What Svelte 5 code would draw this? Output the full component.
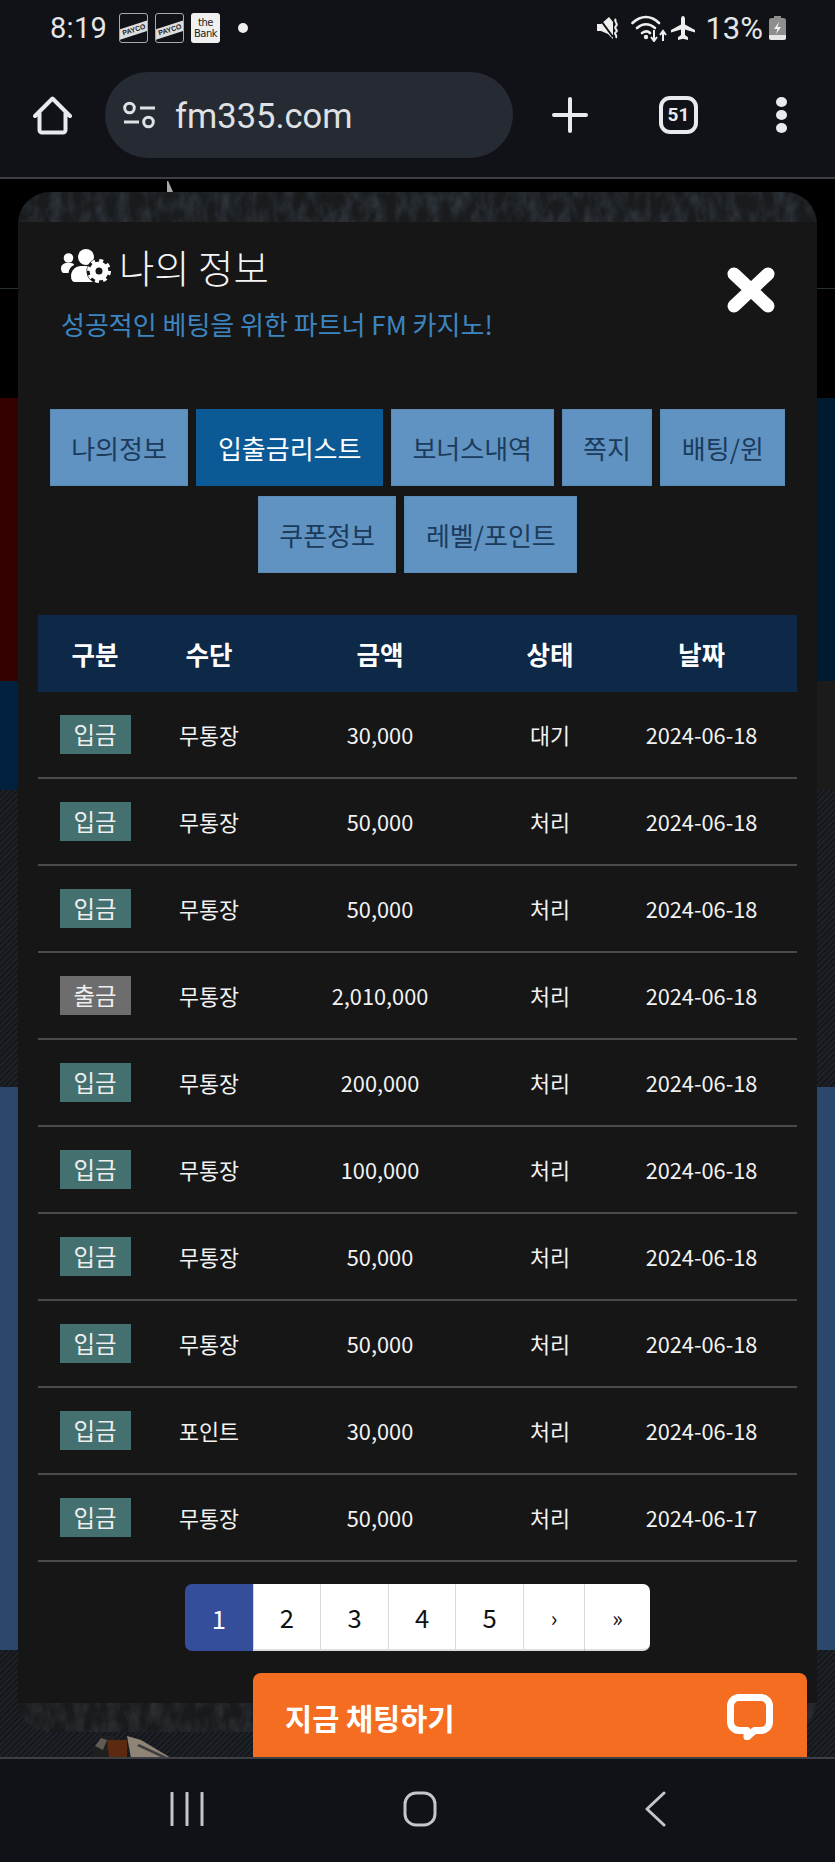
<script>
  const tabs = ['나의정보', '입출금리스트', '보너스내역', '쪽지', '배팅/윈', '쿠폰정보', '레벨/포인트'];
  const activeTab = '입출금리스트';
  const columns = ['구분', '수단', '금액', '상태', '날짜'];
  const rows = [
    { kind: '입금', via: '무통장', amount: '30,000', status: '대기', date: '2024-06-18' },
    { kind: '입금', via: '무통장', amount: '50,000', status: '처리', date: '2024-06-18' },
    { kind: '입금', via: '무통장', amount: '50,000', status: '처리', date: '2024-06-18' },
    { kind: '출금', via: '무통장', amount: '2,010,000', status: '처리', date: '2024-06-18' },
    { kind: '입금', via: '무통장', amount: '200,000', status: '처리', date: '2024-06-18' },
    { kind: '입금', via: '무통장', amount: '100,000', status: '처리', date: '2024-06-18' },
    { kind: '입금', via: '무통장', amount: '50,000', status: '처리', date: '2024-06-18' },
    { kind: '입금', via: '무통장', amount: '50,000', status: '처리', date: '2024-06-18' },
    { kind: '입금', via: '포인트', amount: '30,000', status: '처리', date: '2024-06-18' },
    { kind: '입금', via: '무통장', amount: '50,000', status: '처리', date: '2024-06-17' }
  ];
  const pages = ['1', '2', '3', '4', '5', '›', '»'];
</script>

<div class="screen">
  <header class="chrome">
    <div class="status">
      <span class="time">8:19</span>
      <span class="notif outline"><span class="payco">PAYCO</span></span>
      <span class="notif outline"><span class="payco">PAYCO</span></span>
      <span class="notif bank"><span>the</span><span>Bank</span></span>
      <span class="dot"></span>
      <span class="spacer"></span>
      <svg class="ico-mute" width="22" height="22" viewBox="0 0 22 22">
        <path d="M0 7h4L12 0l4 5v17L11 17 4 14H0z" fill="#eee" />
        <path d="M2 1l14 19" stroke="#101217" stroke-width="2" />
        <path d="M19 2c-3 3 3 4 0 7s3 4 0 6 2 3 0 6" fill="none" stroke="#eee" stroke-width="2" />
      </svg>
      <svg class="ico-wifi" width="36" height="28" viewBox="0 0 36 28">
        <g fill="none" stroke="#eee" stroke-width="2.6" stroke-linecap="round">
          <path d="M1.500 9C10 1 20 1 28 9" />
          <path d="M6 14c6-5 12-5 18 0" />
          <path d="M11 19c3-2 6-2 8 0" />
        </g>
        <circle cx="15" cy="23" r="2.200" fill="#eee" />
        <path d="M23 16v10m-3-3l3 4 3-4M32 27v-9m-3 3l3-4 3 4" fill="none" stroke="#eee" stroke-width="2" />
      </svg>
      <svg class="ico-plane" width="24" height="24" viewBox="0 0 24 24">
        <path d="M12 0c1.300 0 2 1.500 2 3v5.500l10 5.500v2.500l-10-3V19l3 2.200V24l-5-1.300L7 24v-2.800l3-2.200v-5.500l-10 3V14l10-5.500V3c0-1.500.7-3 2-3z" fill="#eee" />
      </svg>
      <span class="battery-text">13%</span>
      <svg class="ico-batt" width="17" height="24" viewBox="0 0 17 24">
        <path d="M5 0h7v2h2.500A2.500 2.500 0 0 1 17 4.500v17a2.500 2.500 0 0 1-2.500 2.500h-12A2.500 2.500 0 0 1 0 21.500v-17A2.500 2.500 0 0 1 2.500 2H5z" fill="#8e8e8e" />
        <path d="M0 19h17v2.500a2.500 2.500 0 0 1-2.500 2.500h-12A2.500 2.500 0 0 1 0 21.500z" fill="#e6e6e6" />
        <path d="M10 6l-5 7h3.500L7 18l5-7H8.500z" fill="#f2f2f2" />
      </svg>
    </div>
    <div class="toolbar">
      <svg class="ico-home" width="40" height="40" viewBox="0 0 40 40">
        <path d="M2 21L19.500 3.500 37 21M6.500 18v17a2.500 2.500 0 0 0 2.500 2.500h21a2.500 2.500 0 0 0 2.500-2.500V18" fill="none" stroke="#e8eaed" stroke-width="4" stroke-linejoin="round" stroke-linecap="round" />
      </svg>
      <div class="omnibox">
        <svg width="32" height="28" viewBox="0 0 32 28">
          <g fill="none" stroke="#dfe1e5" stroke-width="3">
            <circle cx="6.500" cy="7" r="4.800" />
            <path d="M17 7h15M1 21h15" />
            <circle cx="25.500" cy="21" r="4.800" />
          </g>
        </svg>
        <span class="url">fm335.com</span>
      </div>
      <svg class="ico-plus" width="36" height="36" viewBox="0 0 36 36">
        <path d="M18 2v32M2 18h32" stroke="#e8eaed" stroke-width="4" stroke-linecap="round" />
      </svg>
      <span class="tab-count">51</span>
      <span class="menu"><i></i><i></i><i></i></span>
    </div>
  </header>

  <main class="viewport">
    <div class="band blackline"></div>
    <div class="band black"></div>
    <div class="band redblue"></div>
    <div class="band bluegrey"></div>
    <div class="band denim mid"></div>
    <div class="band steel"></div>
    <div class="band denim low"></div>

    <span class="tick"></span>
    <svg class="photo" width="90" height="26" viewBox="0 0 90 26">
      <path d="M0 18L8 4h12v22H0z" fill="#1f1f1f" />
      <path d="M2 14l6-8 6 2-4 10z" fill="#5e5c54" />
      <path d="M14 8h20v18H16z" fill="#5c2a10" />
      <path d="M34 4l14 4 30 18H38z" fill="#8f8577" />
      <path d="M46 12l30 14h-6L44 14z" fill="#3e3e3e" />
    </svg>

    <section class="modal">
      <svg class="strip" width="799" height="30">
        <filter id="grain-top" color-interpolation-filters="sRGB"><feTurbulence type="fractalNoise" baseFrequency="0.09 0.05" numOctaves="3" seed="4" /><feColorMatrix values="0 0 0 0 0.2 0 0 0 0 0.23 0 0 0 0 0.26 1.6 0 0 0 -0.55" /></filter>
        <rect width="799" height="30" fill="#191b1d" />
        <rect width="799" height="30" filter="url(#grain-top)" />
      </svg>
      <div class="panel">
        <div class="head">
          <div>
            <h2 class="title">
              <svg width="50" height="34" viewBox="0 0 50 34">
                <circle cx="7.500" cy="9" r="4.800" fill="#fff" />
                <path d="M0 19c0-3 3-5 6-5h4c2 0 3 1 3 2-3 1.500-5 4-5.500 8H3c-2 0-3-2-3-5z" fill="#fff" />
                <circle cx="25" cy="8" r="8" fill="#fff" />
                <path d="M10 27c0-6 5-10 10-10h11c3 0 5 1 6 3v13H14c-2.500 0-4-2-4-6z" fill="#fff" />
                <circle cx="38" cy="22" r="12.500" fill="#161616" />
                <circle cx="38" cy="22" r="6.500" fill="none" stroke="#fff" stroke-width="6" />
                <circle cx="38" cy="22" r="10.500" fill="none" stroke="#fff" stroke-width="3" stroke-dasharray="4 4.240" />
              </svg>
              <span>나의 정보</span>
            </h2>
            <p class="sub">성공적인 베팅을 위한 파트너 FM 카지노!</p>
          </div>
          <svg class="close" width="48" height="46" viewBox="0 0 48 46">
            <path d="M7 7l34 32M41 7L7 39" stroke="#fff" stroke-width="13" stroke-linecap="round" />
          </svg>
        </div>

        <nav class="tabs">
          {#each tabs as tab}
            <button class="tab" class:active={tab === activeTab}>{tab}</button>
          {/each}
        </nav>

        <table>
          <thead>
            <tr>
              {#each columns as col}
                <th>{col}</th>
              {/each}
            </tr>
          </thead>
          <tbody>
            {#each rows as row}
              <tr>
                <td><span class="badge" class:out={row.kind === '출금'}>{row.kind}</span></td>
                <td>{row.via}</td>
                <td>{row.amount}</td>
                <td>{row.status}</td>
                <td>{row.date}</td>
              </tr>
            {/each}
          </tbody>
        </table>

        <div class="pager">
          {#each pages as page, i}
            <span class="page" class:current={i === 0} class:arrow={i > 4}>{page}</span>
          {/each}
        </div>
      </div>
      <svg class="strip" width="799" height="29">
        <filter id="grain-bottom" color-interpolation-filters="sRGB"><feTurbulence type="fractalNoise" baseFrequency="0.09 0.05" numOctaves="3" seed="9" /><feColorMatrix values="0 0 0 0 0.2 0 0 0 0 0.21 0 0 0 0 0.23 1.6 0 0 0 -0.55" /></filter>
        <rect width="799" height="29" fill="#191a1c" />
        <rect width="799" height="29" filter="url(#grain-bottom)" />
      </svg>
    </section>

    <div class="chat">
      <span>지금 채팅하기</span>
      <svg width="46" height="46" viewBox="0 0 46 46">
        <path d="M12 3.500h22a8.500 8.500 0 0 1 8.500 8.500v16a8.500 8.500 0 0 1-8.500 8.500h-6.500L20 43v-6.500h-8A8.500 8.500 0 0 1 3.500 28V12A8.500 8.500 0 0 1 12 3.500z" fill="none" stroke="#fff" stroke-width="7" stroke-linejoin="round" />
      </svg>
    </div>
  </main>

  <footer class="navbar">
    <svg class="nav-recent" width="34" height="34" viewBox="0 0 34 34">
      <path d="M2 1v32M17 1v32M32 1v32" stroke="#c4c6c9" stroke-width="3" stroke-linecap="round" />
    </svg>
    <svg class="nav-home" width="34" height="36" viewBox="0 0 34 36">
      <rect x="2" y="2" width="30" height="32" rx="11" fill="none" stroke="#c4c6c9" stroke-width="3" />
    </svg>
    <svg class="nav-back" width="22" height="36" viewBox="0 0 22 36">
      <path d="M20 2L3 18l17 16" fill="none" stroke="#c4c6c9" stroke-width="3" stroke-linecap="round" stroke-linejoin="round" />
    </svg>
  </footer>
</div>

<style>
  :global(body) {
    margin: 0;
    background: #000;
  }

  .screen {
    width: 835px;
    height: 1862px;
    display: flex;
    flex-direction: column;
    overflow: hidden;
    font-family: "Noto Sans CJK KR", "Noto Sans", sans-serif;
  }

  /* browser chrome */
  .chrome {
    height: 179px;
    box-sizing: border-box;
    flex: none;
    background: #101217;
    border-bottom: 2px solid #3c4045;
    font-family: Roboto, sans-serif;
    color: #e4e5e7;
  }

  .status {
    height: 56px;
    display: flex;
    align-items: center;
    padding: 0 49px 0 50px;
  }

  .time {
    font-size: 29px;
    width: 69px;
    letter-spacing: 0.3px;
  }

  .notif {
    width: 29px;
    height: 30px;
    margin-right: 7px;
    box-sizing: border-box;
    border-radius: 3px;
    overflow: hidden;
    flex: none;
  }

  .outline {
    border: 1.500px solid #aaa;
    display: flex;
    align-items: center;
    justify-content: center;
  }

  .payco {
    display: block;
    flex: none;
    width: 38px;
    text-align: center;
    background: #ddd;
    color: #222;
    font-family: "Liberation Sans", sans-serif;
    font-size: 7px;
    font-weight: 700;
    line-height: 10px;
    transform: rotate(-18deg);
    margin-top: 3px;
  }

  .bank {
    background: #f0f0f0;
    color: #222;
    font-size: 10px;
    line-height: 11px;
    display: flex;
    flex-direction: column;
    align-items: center;
    justify-content: center;
    font-family: "DejaVu Sans", sans-serif;
    letter-spacing: -0.5px;
  }

  .dot {
    width: 10px;
    height: 10px;
    border-radius: 50%;
    background: #eee;
    margin-left: 11px;
  }

  .spacer {
    flex: 1;
  }

  .ico-wifi {
    margin-left: 12px;
  }

  .ico-plane {
    margin-left: 4px;
  }

  .battery-text {
    font-size: 31px;
    margin-left: 10px;
  }

  .ico-batt {
    margin-left: 6px;
  }

  .toolbar {
    height: 121px;
    display: flex;
    align-items: center;
    position: relative;
    padding-bottom: 4px;
    box-sizing: border-box;
  }

  .ico-home {
    margin-left: 33px;
    flex: none;
  }

  .omnibox {
    width: 408px;
    height: 86px;
    margin-left: 32px;
    border-radius: 43px;
    background: #262a33;
    display: flex;
    align-items: center;
    padding-left: 18px;
    box-sizing: border-box;
    flex: none;
  }

  .url {
    font-size: 34.500px;
    margin-left: 20px;
    padding-top: 3px;
    color: #dfe1e5;
  }

  .ico-plus {
    margin-left: 39px;
    flex: none;
  }

  .tab-count {
    width: 39px;
    height: 38px;
    box-sizing: border-box;
    border: 4px solid #e8eaed;
    border-radius: 11px;
    margin-left: 71px;
    display: flex;
    align-items: center;
    justify-content: center;
    font-size: 19px;
    font-weight: 700;
    color: #e8eaed;
    flex: none;
  }

  .menu {
    display: flex;
    flex-direction: column;
    gap: 3px;
    margin-left: 78px;
  }

  .menu i {
    width: 11px;
    height: 10px;
    border-radius: 50%;
    background: #e8eaed;
  }

  /* page behind the modal */
  .viewport {
    position: relative;
    flex: 1;
    overflow: hidden;
    background: #000;
  }

  .band {
    width: 100%;
  }

  .blackline {
    height: 109px;
    background: #000;
    border-bottom: 1px solid #27312f;
  }

  .black {
    height: 109px;
    background: #000;
  }

  .redblue {
    height: 283px;
    background: linear-gradient(90deg, #340000 0, #360000 50%, #001a30 50%, #001a30 100%);
  }

  .bluegrey {
    height: 109px;
    background: linear-gradient(90deg, #01213f 0, #01213f 50%, #1b1b1b 50%, #1b1b1b 100%);
  }

  .denim {
    background: repeating-linear-gradient(135deg, #14171b 0, #14171b 2px, #1e2226 2px, #1e2226 4px);
  }

  .mid {
    height: 297px;
  }

  .steel {
    height: 563px;
    background: #2b486c;
  }

  .low {
    height: 107px;
  }

  .tick {
    position: absolute;
    left: 167px;
    top: 2px;
    width: 6px;
    height: 11px;
    background: #a8a8a8;
    clip-path: polygon(0 0, 20% 0, 100% 100%, 0 100%);
  }

  .photo {
    position: absolute;
    left: 93px;
    top: 1553px;
  }

  /* modal */
  .modal {
    position: absolute;
    left: 18px;
    top: 13px;
    width: 799px;
    height: 1540px;
    border-radius: 32px;
    overflow: hidden;
    display: flex;
    flex-direction: column;
  }

  .strip {
    display: block;
    flex: none;
  }

  .panel {
    flex: 1;
    background: #161616;
    padding: 0 20px;
    color: #fff;
  }

  .head {
    display: flex;
    justify-content: space-between;
    padding: 17px 22px 0 23px;
    height: 187px;
    box-sizing: border-box;
  }

  .title {
    margin: 0;
    font-size: 38.400px;
    font-weight: 300;
    line-height: 54px;
    display: flex;
    align-items: center;
    gap: 8px;
    color: #f5f5f5;
  }

  .sub {
    margin: 13px 0 0;
    font-size: 26px;
    line-height: 36px;
    color: #3d85c0;
  }

  .close {
    margin-top: 28px;
  }

  .tabs {
    display: flex;
    flex-wrap: wrap;
    justify-content: center;
    gap: 10px 8px;
    height: 206px;
    align-content: flex-start;
  }

  .tab {
    height: 77px;
    padding: 0 20.500px;
    border: 1px solid #5b8cb8;
    border-radius: 0;
    background: #6093c1;
    color: #1b3b5c;
    font: inherit;
    font-size: 26px;
  }

  .tab.active {
    background: #0b5a96;
    border-color: #0b5a96;
    color: #fff;
  }

  table {
    width: 759px;
    table-layout: fixed;
    border-collapse: collapse;
  }

  th {
    height: 77px;
    padding: 0;
    background: #0e2947;
    font-size: 25.600px;
    font-weight: 700;
  }

  th:nth-child(1) { width: 114px; }
  th:nth-child(2) { width: 114px; }
  th:nth-child(3) { width: 228px; }
  th:nth-child(4) { width: 112px; }
  th:nth-child(5) { width: 191px; }

  td {
    height: 85px;
    padding: 0;
    text-align: center;
    font-size: 21.760px;
    border-bottom: 2px solid #4a4a4a;
    color: #f2f2f2;
  }

  .badge {
    display: inline-block;
    width: 71px;
    height: 39px;
    line-height: 38px;
    background: #44706f;
    font-size: 23.400px;
    color: #eee;
  }

  .badge.out {
    background: #6d6d6d;
  }

  .pager {
    display: flex;
    justify-content: center;
    margin: 22px 0 0;
  }

  .page {
    width: 67.600px;
    height: 67px;
    box-sizing: border-box;
    background: #fff;
    color: #111;
    border-left: 1px solid #d9d9d9;
    border-bottom: 2px solid #ddd;
    display: flex;
    align-items: center;
    justify-content: center;
    font-size: 25.600px;
  }

  .page.arrow {
    width: 61px;
    font-size: 22px;
  }

  .page:last-child {
    width: 66px;
    border-radius: 0 7px 7px 0;
  }

  .page.current {
    background: #344e9b;
    color: #fff;
    border-left: 0;
    border-bottom: 0;
    border-radius: 7px 0 0 7px;
  }

  .chat {
    position: absolute;
    left: 253px;
    top: 1494px;
    width: 554px;
    height: 84px;
    box-sizing: border-box;
    padding: 4px 34px 0 32px;
    background: #f46d20;
    border-radius: 8px 8px 0 0;
    display: flex;
    align-items: center;
    justify-content: space-between;
    color: #fff;
    font-size: 29.500px;
    font-weight: 700;
  }

  /* android nav */
  .navbar {
    height: 105px;
    box-sizing: border-box;
    flex: none;
    background: #101217;
    border-top: 2px solid #3c4045;
    display: flex;
    align-items: center;
    padding-left: 170px;
    padding-bottom: 4px;
  }

  .nav-home {
    margin-left: 199px;
  }

  .nav-back {
    margin-left: 207px;
  }
</style>
